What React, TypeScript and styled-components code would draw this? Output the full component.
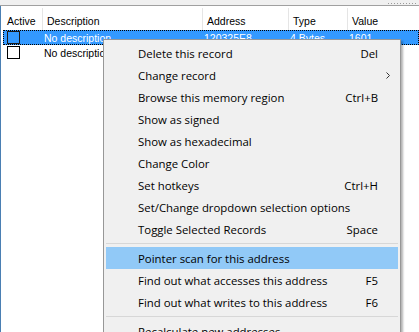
import React from "react";
import styled, { createGlobalStyle } from "styled-components";

const GlobalStyle = createGlobalStyle`
  html, body {
    margin: 0;
    padding: 0;
    background: #ffffff;
    overflow: hidden;
  }
`;

const Window = styled.div`
  position: relative;
  width: 419px;
  height: 332px;
  overflow: hidden;
  background: #ffffff;
  font-family: "Liberation Sans", Arial, sans-serif;
`;

const TopStrip = styled.div`
  height: 5px;
  background: #f0f0f0;
  border-bottom: 1px solid #a0a0a0;
  display: flex;
  justify-content: flex-end;
  align-items: flex-start;
`;

const Grip = styled.div`
  width: 28px;
  height: 1px;
  margin: 3px 3px 0 0;
  background: repeating-linear-gradient(
    to right,
    #9a9a9a 0 1px,
    transparent 1px 3px
  );
`;

const ListView = styled.div`
  height: 326px;
  border-left: 1px solid #4a7fb3;
  padding-left: 2px;
`;

const columns = "40px 160px 86px 59px 1fr";

const HeaderRow = styled.div`
  display: grid;
  grid-template-columns: ${columns};
  height: 24px;
`;

const HeaderCell = styled.div<{ $last?: boolean }>`
  display: flex;
  align-items: center;
  padding: 3px 0 0 4px;
  font-size: 10.5px;
  color: #000;
  border-right: ${(p) => (p.$last ? "none" : "1px solid #e5e5e5")};
  margin-top: 2px;
`;

const Row = styled.div<{ $selected?: boolean }>`
  display: grid;
  grid-template-columns: ${columns};
  height: 15px;
  align-items: center;
  background: ${(p) => (p.$selected ? "#3399ff" : "transparent")};
  color: ${(p) => (p.$selected ? "#ffffff" : "#000000")};
  outline: ${(p) => (p.$selected ? "1px dotted #000" : "none")};
  outline-offset: -1px;
  font-size: 10.5px;
`;

const Cell = styled.div`
  padding-left: 1px;
  white-space: nowrap;
  overflow: hidden;
`;

const CheckCell = styled.div`
  display: flex;
  align-items: center;
  padding-left: 4px;
`;

const CheckBox = styled.div<{ $selected?: boolean }>`
  width: 11px;
  height: 11px;
  border: 1px solid ${(p) => (p.$selected ? "#1a1a1a" : "#000")};
  background: ${(p) => (p.$selected ? "transparent" : "#fff")};
`;

const Menu = styled.div`
  position: absolute;
  left: 103px;
  top: 39px;
  width: 292px;
  padding: 2px;
  background: #f0f0f0;
  border: 1px solid #979797;
  box-shadow: 2px 2px 2px rgba(0, 0, 0, 0.3);
  font-family: "Open Sans", "Noto Sans", sans-serif;
  font-size: 11.4px;
  color: #000;
`;

const Item = styled.div<{ $active?: boolean }>`
  display: flex;
  align-items: center;
  height: 22px;
  padding: 0 20px 0 32px;
  position: relative;
  background: ${(p) => (p.$active ? "#91c9f7" : "transparent")};
  white-space: nowrap;
`;

const Label = styled.span`
  flex: 1;
`;

const Shortcut = styled.span`
  text-align: right;
`;

const Arrow = styled.svg`
  position: absolute;
  right: 8px;
  top: 8px;
`;

const Separator = styled.div`
  height: 1px;
  margin: 3px 0;
  background: #d7d7d7;
`;

type MenuEntry =
  | { sep: true }
  | { label: string; key?: string; sub?: boolean; active?: boolean };

const entries: MenuEntry[] = [
  { label: "Delete this record", key: "Del" },
  { label: "Change record", sub: true },
  { label: "Browse this memory region", key: "Ctrl+B" },
  { label: "Show as signed" },
  { label: "Show as hexadecimal" },
  { label: "Change Color" },
  { label: "Set hotkeys", key: "Ctrl+H" },
  { label: "Set/Change dropdown selection options" },
  { label: "Toggle Selected Records", key: "Space" },
  { sep: true },
  { label: "Pointer scan for this address", active: true },
  { label: "Find out what accesses this address", key: "F5" },
  { label: "Find out what writes to this address", key: "F6" },
  { sep: true },
  { label: "Recalculate new addresses" },
];

const records = [
  { desc: "No description", address: "120325E8", type: "4 Bytes", value: "1601" },
  { desc: "No description", address: "", type: "", value: "" },
];

export default function App() {
  return (
    <>
      <GlobalStyle />
      <Window>
        <TopStrip>
          <Grip />
        </TopStrip>
        <ListView>
          <HeaderRow>
            <HeaderCell>Active</HeaderCell>
            <HeaderCell>Description</HeaderCell>
            <HeaderCell>Address</HeaderCell>
            <HeaderCell>Type</HeaderCell>
            <HeaderCell $last>Value</HeaderCell>
          </HeaderRow>
          {records.map((r, i) => (
            <Row key={i} $selected={i === 0}>
              <CheckCell>
                <CheckBox $selected={i === 0} />
              </CheckCell>
              <Cell>{r.desc}</Cell>
              <Cell>{r.address}</Cell>
              <Cell>{r.type}</Cell>
              <Cell>{r.value}</Cell>
            </Row>
          ))}
        </ListView>

        <Menu>
          {entries.map((e, i) =>
            "sep" in e ? (
              <Separator key={i} />
            ) : (
              <Item key={i} $active={e.active}>
                <Label>{e.label}</Label>
                {e.key && <Shortcut>{e.key}</Shortcut>}
                {e.sub && (
                  <Arrow width="4" height="7" viewBox="0 0 4 7">
                    <polyline
                      points="0.5,0.5 3.5,3.5 0.5,6.5"
                      fill="none"
                      stroke="#333"
                      strokeWidth="1"
                    />
                  </Arrow>
                )}
              </Item>
            )
          )}
        </Menu>
      </Window>
    </>
  );
}
